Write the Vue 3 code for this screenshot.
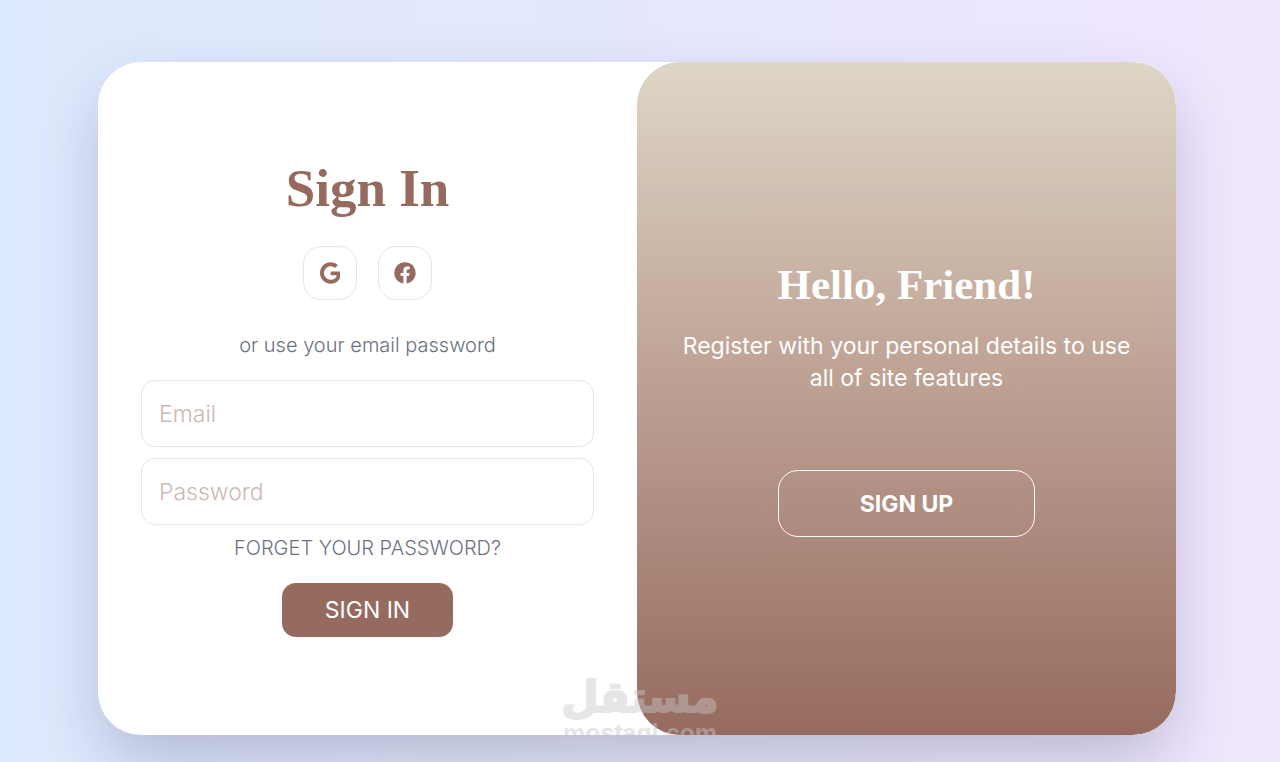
<script setup>
import { ref } from 'vue'

const email = ref('')
const password = ref('')
</script>

<template>
  <main class="page">
    <div class="card">
      <form class="sign-in" @submit.prevent>
        <h1>Sign In</h1>
        <div class="social">
          <button type="button" aria-label="Google">
            <svg viewBox="0 0 488 512" aria-hidden="true">
              <path d="M488 261.8C488 403.3 391.1 504 248 504 110.8 504 0 393.2 0 256S110.8 8 248 8c66.8 0 123 24.5 166.3 64.9l-67.5 64.9C258.5 52.6 94.3 116.6 94.3 256c0 86.5 69.1 156.6 153.7 156.6 98.2 0 135-70.4 140.8-106.9H248v-85.3h236.1c2.3 12.7 3.9 24.9 3.9 41.4z" />
            </svg>
          </button>
          <button type="button" aria-label="Facebook">
            <svg viewBox="0 0 512 512" aria-hidden="true">
              <path d="M504 256C504 119 393 8 256 8S8 119 8 256c0 123.78 90.69 226.38 209.25 245V327.69h-63V256h63v-54.64c0-62.15 37-96.48 93.67-96.48 27.14 0 55.52 4.84 55.52 4.84v61h-31.28c-30.8 0-40.41 19.12-40.41 38.73V256h68.78l-11 71.69h-57.78V501C413.31 482.38 504 379.78 504 256z" />
            </svg>
          </button>
        </div>
        <p class="hint">or use your email password</p>
        <div class="fields">
          <input v-model="email" type="email" placeholder="Email" aria-label="Email" />
          <input v-model="password" type="password" placeholder="Password" aria-label="Password" />
        </div>
        <a class="forgot" href="#">FORGET YOUR PASSWORD?</a>
        <button class="submit" type="submit">SIGN IN</button>
      </form>

      <section class="welcome">
        <h2>Hello, Friend!</h2>
        <p>Register with your personal details to use all of site features</p>
        <button type="button">SIGN UP</button>
      </section>

      <div class="watermark">
        <span class="arabic" lang="ar" dir="rtl">مستقل</span>
        <span class="latin">mostaql.com</span>
      </div>
    </div>
  </main>
</template>

<style>
body {
  margin: 0;
}
</style>

<style scoped>
.page {
  box-sizing: border-box;
  min-height: 100vh;
  padding: 62px 104px 27px 98px;
  display: flex;
  justify-content: center;
  align-items: flex-start;
  overflow: hidden;
  background: linear-gradient(to right, #dde9fe, #e5e8fd 50%, #f1e7ff);
  font-family: Inter, "Open Sans", sans-serif;
}

.card {
  position: relative;
  display: grid;
  grid-template-columns: 1fr 1fr;
  width: 100%;
  max-width: 1200px;
  min-height: 673px;
  overflow: hidden;
  border-radius: 43px;
  background: #fff;
  box-shadow: 0 28px 64px -4px rgba(20, 20, 50, 0.22);
}

h1,
h2,
p {
  margin: 0;
}

h1,
h2 {
  font-family: "Liberation Serif", serif;
  font-weight: 700;
}

button,
input {
  box-sizing: border-box;
  font-family: inherit;
}

button {
  padding: 0;
  cursor: pointer;
}

.sign-in,
.welcome {
  display: flex;
  flex-direction: column;
  align-items: center;
  justify-content: center;
  padding: 0 43px;
}

h1 {
  color: #966b5f;
  font-size: 53px;
  line-height: 56px;
}

.social {
  display: flex;
  gap: 21px;
  margin: 30px 0;
}

.social button {
  display: flex;
  align-items: center;
  justify-content: center;
  width: 54px;
  height: 54px;
  border: 1px solid #e5e5e5;
  border-radius: 18px;
  background: transparent;
}

.social svg {
  height: 22px;
  fill: #966b5f;
}

.hint,
.forgot {
  color: #6b7280;
  font-size: 20px;
  font-weight: 300;
  line-height: 30px;
}

.fields {
  display: grid;
  gap: 11px;
  width: 100%;
  margin: 20px 0 8px;
}

input {
  width: 100%;
  height: 67px;
  padding: 0 17px;
  border: 1px solid #e5e5e8;
  border-radius: 14px;
  outline: none;
  background: #fff;
  color: #966b5f;
  font-size: 23px;
  font-weight: 300;
}

input::placeholder {
  color: #cdb8b2;
  opacity: 1;
}

.forgot {
  text-decoration: none;
}

.submit {
  width: 171px;
  height: 54px;
  margin-top: 20px;
  border: 0;
  border-radius: 14px;
  background: #966b5f;
  color: #fff;
  font-size: 23px;
}

.welcome {
  border-radius: 43px;
  background: linear-gradient(#ded6c6, #c3a99b 40%, #966b5f);
  color: #fff;
  text-align: center;
}

h2 {
  font-size: 43px;
  line-height: 50px;
}

.welcome p {
  margin: 20px 0 76px;
  font-size: 23px;
  line-height: 32px;
}

.welcome button {
  width: 257px;
  height: 67px;
  border: 1px solid #fff;
  border-radius: 20px;
  background: transparent;
  color: #fff;
  font-size: 23px;
  font-weight: 700;
}

.watermark {
  position: absolute;
  bottom: -12px;
  left: 6px;
  right: 0;
  display: flex;
  flex-direction: column;
  align-items: center;
  color: #c8c8c8;
  opacity: 0.45;
  pointer-events: none;
}

.arabic {
  font-family: "DejaVu Sans", sans-serif;
  font-size: 43px;
  font-weight: 700;
  line-height: 44px;
  -webkit-text-stroke: 2px #c8c8c8;
}

.latin {
  font-family: "Liberation Sans", sans-serif;
  font-size: 25px;
  font-weight: 700;
  line-height: 28px;
}
</style>
